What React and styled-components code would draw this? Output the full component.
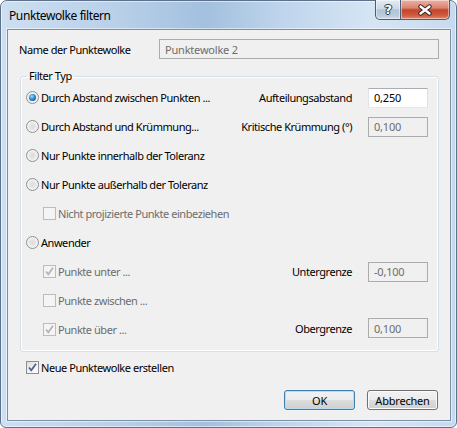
import React from 'react';
import styled, { createGlobalStyle, css } from 'styled-components';

const GlobalStyle = createGlobalStyle`
  html, body { margin: 0; padding: 0; background: #ffffff; }
  body {
    font-family: "Noto Sans", "Open Sans", sans-serif;
    font-size: 11px;
    letter-spacing: -0.45px;
    color: #000;
  }
  * { box-sizing: border-box; }
`;

const Window = styled.div`
  width: 457px;
  height: 428px;
  display: flex;
  flex-direction: column;
  padding: 0 5px 6px 6px;
  border: 1px solid #5d728a;
  border-radius: 7px 7px 6px 6px;
  background: linear-gradient(to right, #cddff1 0%, #b9d0e9 25%, #a3c0df 45%, #bfd5ec 62%, #d6e5f4 82%, #c6daef 100%);
  box-shadow: inset 0 0 0 1px rgba(255, 255, 255, 0.55);
`;

const TitleBar = styled.div`
  height: 28px;
  display: flex;
  align-items: flex-start;
`;

const Title = styled.div`
  flex: 1;
  padding: 8px 0 0 2px;
  font-size: 12px;
  line-height: 14px;
  letter-spacing: -0.4px;
`;

const CaptionButton = styled.div`
  height: 20px;
  margin-top: -1px;
  display: flex;
  align-items: center;
  justify-content: center;
  border: 1px solid #4b5d74;
  border-top: none;
  box-shadow: inset 0 0 0 1px rgba(255, 255, 255, 0.45);
  ${p => p.close ? css`
    width: 49px;
    margin-right: 1px;
    border-left: none;
    border-radius: 0 0 5px 0;
    background: linear-gradient(#eab2a6 0%, #dc8270 42%, #c2442b 52%, #cd5a3f 80%, #e08a6d 100%);
  ` : css`
    width: 26px;
    border-radius: 0 0 0 5px;
    background: linear-gradient(#e4ecf4 0%, #cdd9e6 45%, #b3c4d6 52%, #b9cadc 80%, #cfdcea 100%);
  `}
`;

const HelpGlyph = styled.span`
  font-family: "DejaVu Sans", sans-serif;
  font-weight: bold;
  font-size: 13px;
  color: #fff;
  line-height: 1;
  text-shadow: 0 0 1px #2d3b4d, 0 0 1px #2d3b4d, 1px 0 0 #2d3b4d, -1px 0 0 #2d3b4d, 0 1px 0 #2d3b4d, 0 -1px 0 #2d3b4d;
`;

const Client = styled.div`
  flex: 1;
  display: flex;
  flex-direction: column;
  padding: 9px 0 0 0;
  background: #f0f0f0;
  border: 1px solid #7b8fa5;
  box-shadow: 0 0 0 1px rgba(255, 255, 255, 0.5);
`;

const NameRow = styled.div`
  display: flex;
  align-items: center;
  padding-left: 11px;
  height: 20px;
`;

const NameLabel = styled.span`
  width: 140px;
`;

const TextBox = styled.div`
  width: ${p => p.w || 60}px;
  height: 20px;
  display: flex;
  align-items: center;
  padding-left: 5px;
  border: 1px solid #acacac;
  background: #f0f0f0;
  color: #6d6d6d;
  letter-spacing: -0.2px;
  flex: none;
  ${p => p.enabled && css`
    background: #ffffff;
    color: #000;
    border-color: #abadb3 #dbdfe6 #e3e9ef #e2e3ea;
  `}
`;

const Group = styled.fieldset`
  margin: 10px 0 0 12px;
  width: 419px;
  padding: 0 0 7px 0;
  border: 1px solid #d5dfe5;
  border-radius: 3px;
  box-shadow: inset 0 0 0 1px #fff;
`;

const Legend = styled.legend`
  margin-left: 6px;
  padding: 0 2px;
  line-height: 14px;
`;

const Row = styled.div`
  height: 29px;
  display: flex;
  align-items: center;
  padding-left: ${p => (p.indent ? 22 : 5)}px;
  padding-right: 10px;
`;

const Option = styled.label`
  display: flex;
  align-items: center;
  gap: 2px;
  color: ${p => (p.disabled ? '#6d6d6d' : '#000')};
  white-space: nowrap;
`;

const Radio = styled.span`
  width: 13px;
  height: 13px;
  flex: none;
  border-radius: 50%;
  border: 1px solid #8e8f8f;
  display: flex;
  align-items: center;
  justify-content: center;
  background: radial-gradient(circle at 50% 50%, #dcdcdc 0%, #e8e8e8 45%, #f6f6f6 70%, #d4d4d4 100%);
  ${p => p.checked && css`
    &::after {
      content: '';
      width: 7px;
      height: 7px;
      border-radius: 50%;
      background: radial-gradient(circle at 40% 35%, #a6e0ff 0%, #3493dc 40%, #114a8c 90%);
    }
  `}
`;

const Box = styled.span`
  width: 13px;
  height: 13px;
  flex: none;
  display: flex;
  align-items: center;
  justify-content: center;
  border: 1px solid ${p => (p.disabled ? '#bcbcbc' : '#8e8f8f')};
  background: ${p => (p.disabled
    ? '#f4f4f4'
    : 'linear-gradient(135deg, #dcdcdc 0%, #f4f4f4 60%, #ffffff 100%)')};
`;

const Field = styled.div`
  margin-left: auto;
  display: flex;
  align-items: center;
  gap: 16px;
  margin-top: ${p => p.lift || 0}px;
`;

const BottomCheck = styled.div`
  display: flex;
  padding-left: 18px;
  margin-top: 8px;
  height: 14px;
  align-items: center;
`;

const Buttons = styled.div`
  display: flex;
  justify-content: flex-end;
  gap: 12px;
  padding-right: 12px;
  margin-top: 16px;
`;

const Button = styled.div`
  width: 71px;
  height: 20px;
  display: flex;
  align-items: center;
  justify-content: center;
  letter-spacing: -0.2px;
  border: 1px solid ${p => (p.primary ? '#3c7fb1' : '#707070')};
  border-radius: 3px;
  background: linear-gradient(#f2f2f2 0%, #ebebeb 50%, #dddddd 51%, #cfcfcf 100%);
  box-shadow: inset 0 0 0 1px ${p => (p.primary ? '#b7dcf4' : '#fbfbfb')};
`;

const Check = ({ disabled }) => (
  <svg width="11" height="11" viewBox="0 0 11 11">
    <path d="M2 5.5 L4.3 8.3 L9 1.8" fill="none" stroke={disabled ? '#b3b3b3' : '#4a5f97'} strokeWidth="1.7" />
  </svg>
);

const CloseGlyph = () => (
  <svg width="16" height="12" viewBox="0 0 16 12">
    <path d="M3.5 2.5 L12.5 9.5 M12.5 2.5 L3.5 9.5" stroke="#3b2420" strokeWidth="4.4" strokeLinecap="round" />
    <path d="M3.5 2.5 L12.5 9.5 M12.5 2.5 L3.5 9.5" stroke="#ffffff" strokeWidth="2.4" strokeLinecap="round" />
  </svg>
);

const CheckOption = ({ checked, disabled, children }) => (
  <Option disabled={disabled}>
    <Box disabled={disabled}>{checked && <Check disabled={disabled} />}</Box>
    {children}
  </Option>
);

const RadioOption = ({ checked, children }) => (
  <Option>
    <Radio checked={checked} />
    {children}
  </Option>
);

export default function App() {
  return (
    <>
      <GlobalStyle />
      <Window>
        <TitleBar>
          <Title>Punktewolke filtern</Title>
          <CaptionButton><HelpGlyph>?</HelpGlyph></CaptionButton>
          <CaptionButton close><CloseGlyph /></CaptionButton>
        </TitleBar>
        <Client>
          <NameRow>
            <NameLabel>Name der Punktewolke</NameLabel>
            <TextBox w={280}>Punktewolke 2</TextBox>
          </NameRow>

          <Group>
            <Legend>Filter Typ</Legend>
            <Row>
              <RadioOption checked>Durch Abstand zwischen Punkten ...</RadioOption>
              <Field>
                <span>Aufteilungsabstand</span>
                <TextBox enabled>0,250</TextBox>
              </Field>
            </Row>
            <Row>
              <RadioOption>Durch Abstand und Krümmung...</RadioOption>
              <Field>
                <span>Kritische Krümmung (°)</span>
                <TextBox>0,100</TextBox>
              </Field>
            </Row>
            <Row>
              <RadioOption>Nur Punkte innerhalb der Toleranz</RadioOption>
            </Row>
            <Row>
              <RadioOption>Nur Punkte außerhalb der Toleranz</RadioOption>
            </Row>
            <Row indent>
              <CheckOption disabled>Nicht projizierte Punkte einbeziehen</CheckOption>
            </Row>
            <Row>
              <RadioOption>Anwender</RadioOption>
            </Row>
            <Row indent>
              <CheckOption checked disabled>Punkte unter ...</CheckOption>
              <Field>
                <span>Untergrenze</span>
                <TextBox>-0,100</TextBox>
              </Field>
            </Row>
            <Row indent>
              <CheckOption disabled>Punkte zwischen ...</CheckOption>
            </Row>
            <Row indent>
              <CheckOption checked disabled>Punkte über ...</CheckOption>
              <Field lift={-3}>
                <span>Obergrenze</span>
                <TextBox>0,100</TextBox>
              </Field>
            </Row>
          </Group>

          <BottomCheck>
            <CheckOption checked>Neue Punktewolke erstellen</CheckOption>
          </BottomCheck>

          <Buttons>
            <Button primary>OK</Button>
            <Button>Abbrechen</Button>
          </Buttons>
        </Client>
      </Window>
    </>
  );
}
